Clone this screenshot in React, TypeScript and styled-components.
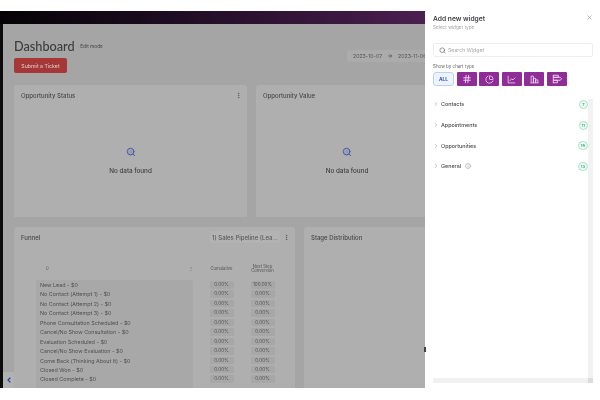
import React from "react";
import styled, { createGlobalStyle } from "styled-components";
import { ChevronRight, ChevronLeft, Search, X, Hash, PieChart, Info, MoreVertical, ArrowRight } from "lucide-react";

const Global = createGlobalStyle`
  html, body { margin: 0; padding: 0; background: #fff; overflow: hidden; }
  * { box-sizing: border-box; }
`;

const Page = styled.div`
  position: relative;
  width: 600px;
  height: 400px;
  padding-top: 11px;
  overflow: hidden;
  background: #fff;
  filter: blur(0.45px);
  font-family: "Inter", "Liberation Sans", sans-serif;
`;

const Frame = styled.div`
  position: relative;
  display: flex;
  flex-direction: column;
  height: 377px;
  overflow: hidden;
  background: #a5a5a5;
`;

const TopBar = styled.div`
  flex: none;
  height: 13px;
  background: linear-gradient(90deg, #050205 0%, #1a0b1e 25%, #341539 50%, #4d2052 72%, #4d2052 100%);
`;

const Body = styled.div`
  flex: 1;
  min-height: 0;
  display: flex;
`;

const Rail = styled.div`
  flex: none;
  width: 3px;
  background: #0c0c0c;
`;

const Main = styled.main`
  flex: 1;
  min-width: 0;
  padding: 11px 0 0 11px;
  display: flex;
  flex-direction: column;
`;

const Head = styled.div`
  flex: none;
  display: flex;
  align-items: flex-start;
  justify-content: space-between;
  height: 50px;
  padding-right: 175px;
`;

const HeadLeft = styled.div`
  display: flex;
  flex-direction: column;
  align-items: flex-start;
  gap: 2px;
`;

const TitleRow = styled.div`
  display: flex;
  align-items: center;
  gap: 4px;
  height: 21px;
`;

const Title = styled.h1`
  margin: 0;
  font: 500 12.7px "Lato", sans-serif;
  color: #3c3c3c;
`;

const EditTag = styled.span`
  font-size: 4.8px;
  color: #444;
  padding: 1px 1.5px;
`;

const TicketButton = styled.button`
  width: 53px;
  height: 15px;
  padding: 0;
  border: 0;
  border-radius: 2px;
  background: #a63737;
  color: #dcc0c0;
  font: 500 5.2px "Inter", sans-serif;
`;

const DateBox = styled.div`
  display: flex;
  align-items: center;
  gap: 5px;
  width: 78px;
  height: 12px;
  margin: 15px 0 0;
  padding-left: 6px;
  background: #ababab;
  border-radius: 2px 0 0 2px;
  font-size: 5.2px;
  white-space: nowrap;
  overflow: hidden;
  color: #555;
  svg { color: #3a3a3a; flex: none; }
`;

const Row = styled.div<{ $height: number; $first: number; $second: number }>`
  flex: none;
  display: grid;
  grid-template-columns: ${(p) => p.$first}px ${(p) => p.$second}px;
  gap: 9px;
  height: ${(p) => p.$height}px;
  margin-bottom: 10px;
`;

const Card = styled.section`
  position: relative;
  min-width: 0;
  background: #afafaf;
  border-radius: 3px 3px 0 0;
  overflow: hidden;
`;

const CardHead = styled.div`
  display: flex;
  align-items: center;
  justify-content: space-between;
  height: 20px;
  padding: 0 5px 0 7px;
  font: 500 6px "Inter", sans-serif;
  color: #474747;
`;

const EmptyState = styled.div`
  display: flex;
  flex-direction: column;
  align-items: center;
  gap: 10px;
  padding-top: 42px;
  font: 500 6.3px "Inter", sans-serif;
  color: #3f3f3f;
`;

const EmptyIcon = styled.span`
  display: flex;
  color: #4a5db0;
  background: radial-gradient(circle, rgba(74, 93, 176, 0.3) 0%, rgba(74, 93, 176, 0) 70%);
`;

const PipelineSelect = styled.div`
  display: flex;
  align-items: center;
  width: 70px;
  height: 12px;
  margin-left: auto;
  margin-right: 3px;
  padding-left: 2px;
  background: #b3b3b3;
  font-size: 6px;
  color: #5b5b5b;
  white-space: nowrap;
`;

const FunnelTable = styled.div`
  display: grid;
  grid-template-columns: 165px 41px 41px;
  column-gap: 0;
  padding: 15px 0 0 22px;
`;

const ColHead = styled.div`
  display: flex;
  align-items: center;
  justify-content: center;
  height: 14px;
  margin-bottom: 4px;
  text-align: center;
  line-height: 4.4px;
  font-size: 4.2px;
  color: #555;
`;

const LabelHead = styled(ColHead)`
  justify-content: space-between;
  padding: 0 3px 0 10px;
  width: 160px;
`;

const LabelCol = styled.div`
  width: 157px;
  height: 120px;
  padding: 1px 0 0 4px;
  background: #a8a8a8;
  border-radius: 2px;
`;

const LabelRow = styled.div`
  height: 9.45px;
  line-height: 9px;
  font-size: 5.4px;
  color: #505050;
  white-space: nowrap;
`;

const ValueCol = styled.div`
  display: flex;
  flex-direction: column;
  align-items: center;
  padding-top: 1px;
`;

const ValuePill = styled.div`
  width: 24px;
  height: 7.5px;
  margin-bottom: 1.95px;
  line-height: 7.5px;
  text-align: center;
  font-size: 4.6px;
  color: #505050;
  background: #a7a7a7;
  border-radius: 1px;
`;

const CollapseTab = styled.div`
  position: absolute;
  left: 3px;
  bottom: 0;
  width: 11px;
  height: 16px;
  display: flex;
  align-items: center;
  justify-content: center;
  background: #b2b2b2;
  color: #2d3a9a;
`;

const Drawer = styled.aside`
  position: absolute;
  top: 0;
  right: 0;
  width: 175px;
  height: 100%;
  background: #fff;
`;

const DrawerHead = styled.div`
  display: flex;
  justify-content: space-between;
  height: 43px;
  padding: 15px 7px 0 8px;
`;

const DrawerTitle = styled.h2`
  margin: 0;
  font: 600 6.7px/9px "Inter", sans-serif;
  color: #3f3f46;
`;

const DrawerSub = styled.p`
  margin: 0;
  font-size: 4.7px;
  line-height: 7px;
  color: #a3a3a3;
`;

const CloseIcon = styled.span`
  display: flex;
  margin-top: -1px;
  color: #8a8a8a;
`;

const SearchBox = styled.div`
  display: flex;
  align-items: center;
  gap: 2px;
  width: 160px;
  height: 14px;
  margin-left: 8px;
  padding-left: 5px;
  border: 1px solid #eeeeee;
  border-radius: 2px;
  font-size: 5.2px;
  color: #a8a8a8;
  svg { color: #555; }
`;

const ChartLabel = styled.div`
  margin: 6px 0 0 8px;
  height: 8px;
  font-size: 4.5px;
  line-height: 8px;
  color: #666;
`;

const ChartButtons = styled.div`
  display: flex;
  gap: 2.6px;
  margin: 1px 0 0 8px;
`;

const AllButton = styled.button`
  width: 21px;
  height: 14px;
  padding: 0;
  border: 1px solid #bcd0f5;
  border-radius: 3px;
  background: #eef4ff;
  color: #2f55b8;
  font: 700 4.8px "Inter", sans-serif;
`;

const TypeButton = styled.button`
  display: flex;
  align-items: center;
  justify-content: center;
  width: 20px;
  height: 14px;
  padding: 0;
  border: 0;
  border-radius: 1px;
  background: #8f2c97;
  color: #f4e4f5;
`;

const Accordion = styled.div`
  position: relative;
  margin-top: 8px;
  height: 298px;
  padding-left: 8px;
`;

const AccordionRow = styled.div`
  display: flex;
  align-items: center;
  height: 20.7px;
  width: 155px;
  font: 500 5.4px "Inter", sans-serif;
  color: #4a4a4a;
  svg { color: #8b8b8b; flex: none; }
`;

const RowLabel = styled.span`
  display: flex;
  align-items: center;
  gap: 4px;
  margin-left: 2px;
  flex: 1;
`;

const CountBadge = styled.span`
  display: flex;
  align-items: center;
  justify-content: center;
  height: 9px;
  min-width: 9px;
  padding: 0 2px;
  border: 1px solid #9fe6c4;
  border-radius: 5px;
  background: #eefbf4;
  font-size: 4px;
  color: #2c9a68;
`;

const VScroll = styled.div`
  position: absolute;
  top: 5px;
  right: 7px;
  width: 5px;
  height: 284px;
  background: #f2f2f2;
`;

const HScroll = styled.div`
  position: absolute;
  left: 8px;
  top: 284px;
  width: 155px;
  height: 5px;
  background: #f1f1f1;
`;

const ScrollCorner = styled.div`
  position: absolute;
  top: 284px;
  right: 7px;
  width: 5px;
  height: 5px;
  background: #dcdcdc;
`;

const Handle = styled.div`
  position: absolute;
  left: -1px;
  top: 347px;
  width: 1.5px;
  height: 5px;
  background: #444;
`;

const funnelRows = [
  ["New Lead - $0", "100.00%"],
  ["No Contact (Attempt 1) - $0", "0.00%"],
  ["No Contact (Attempt 2) - $0", "0.00%"],
  ["No Contact (Attempt 3) - $0", "0.00%"],
  ["Phone Consultation Scheduled  - $0", "0.00%"],
  ["Cancel/No Show Consultation - $0", "0.00%"],
  ["Evaluation Scheduled  - $0", "0.00%"],
  ["Cancel/No Show Evaluation - $0", "0.00%"],
  ["Come Back (Thinking About It) - $0", "0.00%"],
  ["Closed Won - $0", "0.00%"],
  ["Closed Complete - $0", "0.00%"],
];

const sections: { name: string; count: number; info?: boolean }[] = [
  { name: "Contacts", count: 7 },
  { name: "Appointments", count: 11 },
  { name: "Opportunities", count: 16 },
  { name: "General", count: 13, info: true },
];

const LineIcon = () => (
  <svg width="9" height="9" viewBox="0 0 12 12" fill="none" stroke="currentColor" strokeWidth="1">
    <path d="M1.5 1v9.5H11M3.5 8l2.5-3 2 1.5L11 3.5" />
  </svg>
);
const BarsIcon = () => (
  <svg width="9" height="9" viewBox="0 0 12 12" fill="none" stroke="currentColor" strokeWidth="1">
    <path d="M1.5 10.5V1.5h3v9M4.5 10.5V4.5h3v6M7.5 10.5V6.5h3v4M.5 10.5h11" />
  </svg>
);
const FunnelBarsIcon = () => (
  <svg width="10" height="10" viewBox="0 0 12 12" fill="none" stroke="currentColor" strokeWidth="1">
    <path d="M1.5 1v10M1.5 1.5h6v2.5h-6M1.5 4h8.5l1.5 1.8L10 7.5H1.5M1.5 7.5h5v3h-5" />
  </svg>
);
const More = () => <MoreVertical size={7} color="#4a4a4a" />;

function NoData() {
  return (
    <EmptyState>
      <EmptyIcon>
        <Search size={10} strokeWidth={2.4} />
      </EmptyIcon>
      No data found
    </EmptyState>
  );
}

export default function App() {
  return (
    <Page>
      <Global />
      <Frame>
        <TopBar />
        <Body>
          <Rail />
          <Main>
            <Head>
              <HeadLeft>
                <TitleRow>
                  <Title>Dashboard</Title>
                  <EditTag>Edit mode</EditTag>
                </TitleRow>
                <TicketButton>Submit a Ticket</TicketButton>
              </HeadLeft>
              <DateBox>
                2023-10-07 <ArrowRight size={6} /> 2023-11-06
              </DateBox>
            </Head>
            <Row $height={132} $first={233} $second={182}>
              <Card>
                <CardHead>
                  Opportunity Status
                  <More />
                </CardHead>
                <NoData />
              </Card>
              <Card>
                <CardHead>Opportunity Value</CardHead>
                <NoData />
              </Card>
            </Row>
            <Row $height={170} $first={281} $second={280}>
              <Card>
                <CardHead>
                  Funnel
                  <PipelineSelect>1) Sales Pipeline (Lea...</PipelineSelect>
                  <More />
                </CardHead>
                <FunnelTable>
                  <LabelHead>
                    <span>0</span>
                    <span>⋮</span>
                  </LabelHead>
                  <ColHead>Cumulative</ColHead>
                  <ColHead>
                    Next Step
                    <br />
                    Conversion
                  </ColHead>
                  <LabelCol>
                    {funnelRows.map(([label]) => (
                      <LabelRow key={label}>{label}</LabelRow>
                    ))}
                  </LabelCol>
                  <ValueCol>
                    {funnelRows.map(([label]) => (
                      <ValuePill key={label}>0.00%</ValuePill>
                    ))}
                  </ValueCol>
                  <ValueCol>
                    {funnelRows.map(([label, next]) => (
                      <ValuePill key={label}>{next}</ValuePill>
                    ))}
                  </ValueCol>
                </FunnelTable>
              </Card>
              <Card>
                <CardHead>Stage Distribution</CardHead>
              </Card>
            </Row>
          </Main>
        </Body>
        <CollapseTab>
          <ChevronLeft size={8} strokeWidth={3.5} />
        </CollapseTab>
      </Frame>
      <Drawer>
        <Handle />
        <DrawerHead>
          <div>
            <DrawerTitle>Add new widget</DrawerTitle>
            <DrawerSub>Select widget type</DrawerSub>
          </div>
          <CloseIcon>
            <X size={7} />
          </CloseIcon>
        </DrawerHead>
        <SearchBox>
          <Search size={7} />
          Search Widget
        </SearchBox>
        <ChartLabel>Show by chart type</ChartLabel>
        <ChartButtons>
          <AllButton>ALL</AllButton>
          <TypeButton>
            <Hash size={10} />
          </TypeButton>
          <TypeButton>
            <PieChart size={9} />
          </TypeButton>
          <TypeButton>
            <LineIcon />
          </TypeButton>
          <TypeButton>
            <BarsIcon />
          </TypeButton>
          <TypeButton>
            <FunnelBarsIcon />
          </TypeButton>
        </ChartButtons>
        <Accordion>
          {sections.map((s) => (
            <AccordionRow key={s.name}>
              <ChevronRight size={6} />
              <RowLabel>
                {s.name}
                {s.info && <Info size={6} />}
              </RowLabel>
              <CountBadge>{s.count}</CountBadge>
            </AccordionRow>
          ))}
          <VScroll />
          <HScroll />
          <ScrollCorner />
        </Accordion>
      </Drawer>
    </Page>
  );
}
